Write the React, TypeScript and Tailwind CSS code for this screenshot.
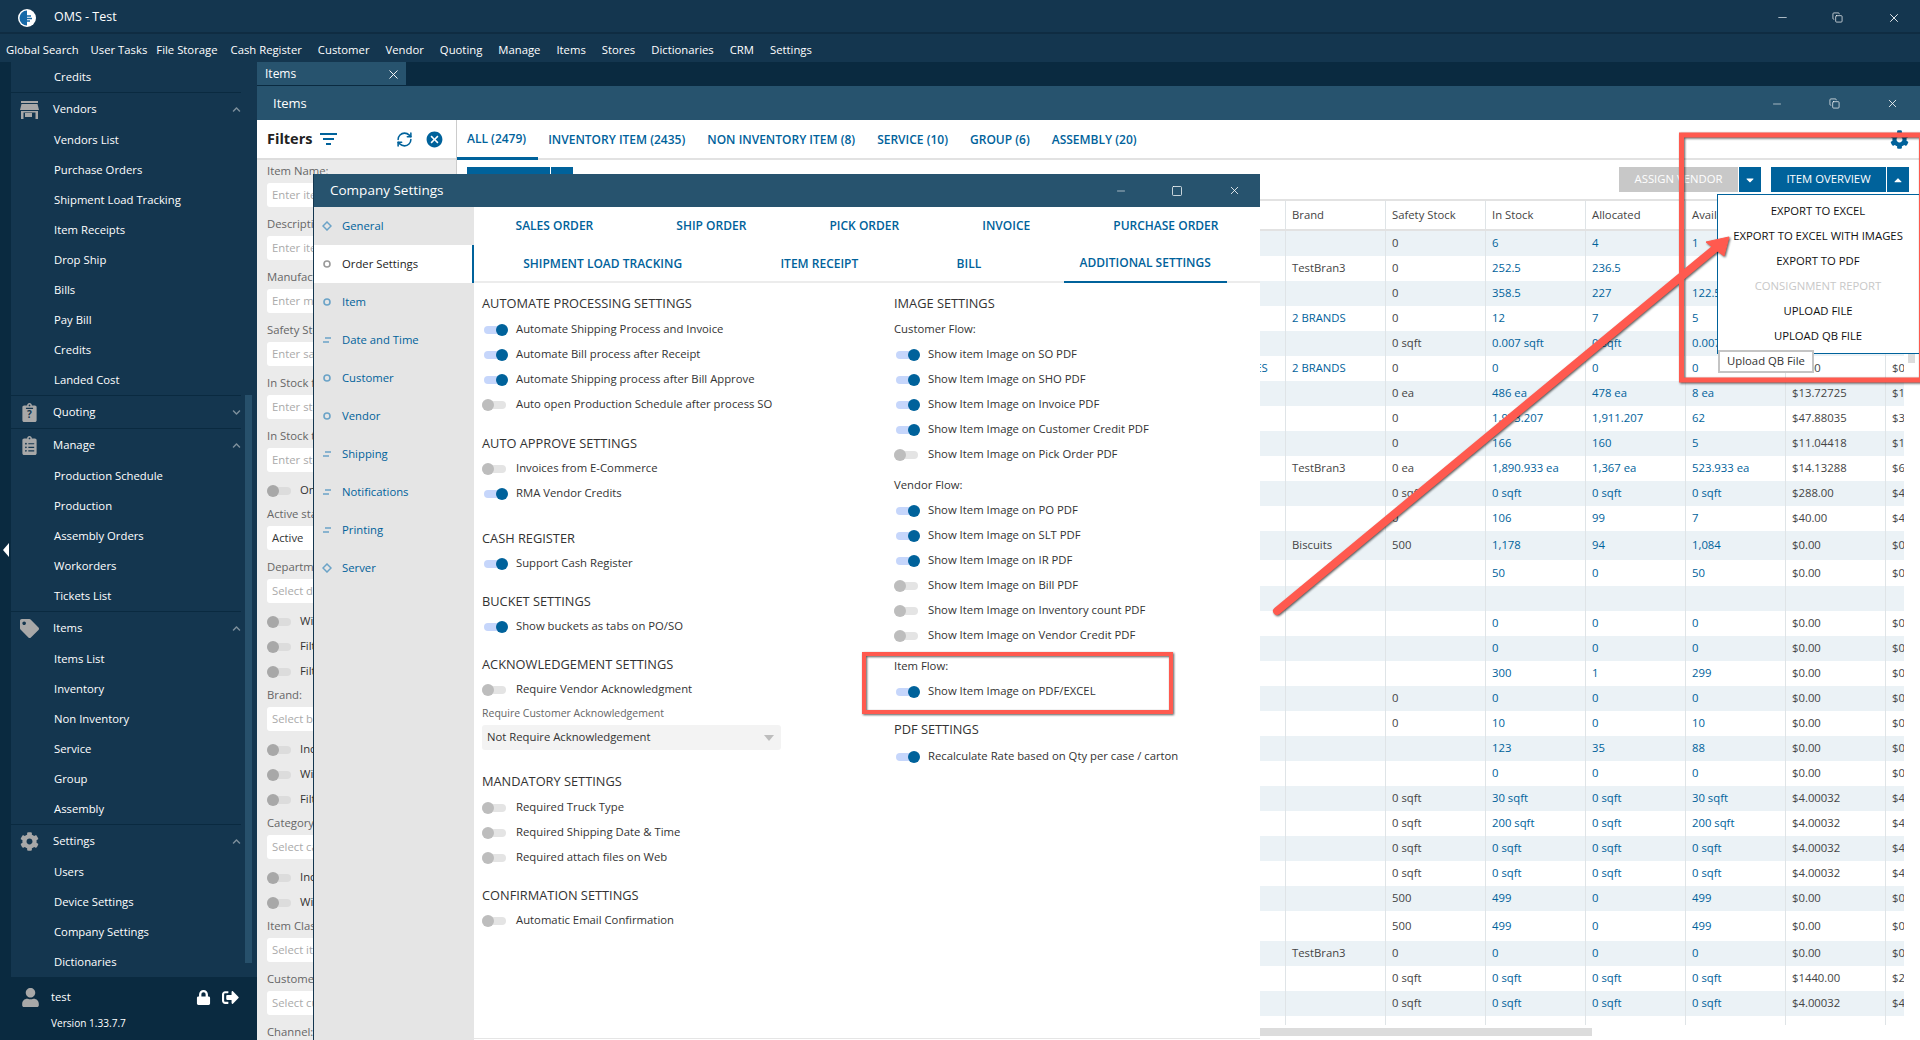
import { ReactNode } from "react";
import { FaClipboard, FaClipboardList, FaTag, FaCog, FaUser, FaLock, FaSignOutAlt, FaChevronUp, FaChevronDown, FaCaretDown, FaCaretUp } from "react-icons/fa";
import { MdCancel } from "react-icons/md";
import { Minus, X, Square, Copy, RefreshCw } from "lucide-react";

// gaps between the top menu items are not even in the app
const menu: [string, string][] = [
  ["Global Search", "mr-[12px]"],
  ["User Tasks", "mr-[9px]"],
  ["File Storage", "mr-[13px]"],
  ["Cash Register", "mr-[16px]"],
  ["Customer", "mr-[16px]"],
  ["Vendor", "mr-[16px]"],
  ["Quoting", "mr-[16px]"],
  ["Manage", "mr-[16px]"],
  ["Items", "mr-[16px]"],
  ["Stores", "mr-[16px]"],
  ["Dictionaries", "mr-[16px]"],
  ["CRM", "mr-[16px]"],
  ["Settings", ""],
];

function SideSub({ label }: { label: string }) {
  return <div className="h-[30px] pl-[43px] flex items-center text-white">{label}</div>;
}

function SideHead({ icon, label, open }: { icon: ReactNode; label: string; open?: boolean }) {
  return (
    <div className="h-[33px] flex items-center border-t border-[#0a2a40] text-white">
      <div className="w-[42px] pl-[9px] text-[#a8a8a8] text-[19px] flex">{icon}</div>
      <span className="flex-1">{label}</span>
      <span className="text-[#7d8f9c] text-[9px]">{open ? <FaChevronUp /> : <FaChevronDown />}</span>
    </div>
  );
}

function StoreIcon() {
  return (
    <svg width="19" height="19" viewBox="0 0 19 19" fill="#a8a8a8">
      <rect x="1" y="1" width="17" height="2" />
      <path d="M1.5 4H17.5L19 10H0Z" />
      <path d="M1 11H18V19H15.5V12.5H3.5V19H1ZM5 13H12V17H5Z" fillRule="evenodd" />
    </svg>
  );
}

function QuoteIcon() {
  return (
    <span className="relative flex">
      <FaClipboard />
      <span className="absolute inset-x-0 top-[5px] text-center text-[10px] leading-[12px] font-bold text-[#14364f]">?</span>
    </span>
  );
}

function Sidebar() {
  const groups = [
    { icon: <StoreIcon />, label: "Vendors", open: true, subs: ["Vendors List", "Purchase Orders", "Shipment Load Tracking", "Item Receipts", "Drop Ship", "Bills", "Pay Bill", "Credits", "Landed Cost"] },
    { icon: <QuoteIcon />, label: "Quoting", open: false, subs: [] },
    { icon: <FaClipboardList />, label: "Manage", open: true, subs: ["Production Schedule", "Production", "Assembly Orders", "Workorders", "Tickets List"] },
    { icon: <FaTag />, label: "Items", open: true, subs: ["Items List", "Inventory", "Non Inventory", "Service", "Group", "Assembly"] },
    { icon: <FaCog />, label: "Settings", open: true, subs: ["Users", "Device Settings", "Company Settings", "Dictionaries"] },
  ];
  return (
    <aside className="w-[257px] shrink-0 flex flex-col bg-[#14364f]">
      <div className="h-[915px] flex overflow-hidden">
        <div className="w-[11px] bg-[#0a2a40] pt-[481px] pl-[3px]">
          <svg width="6" height="14" viewBox="0 0 6 14"><path d="M6 0V14L0 7Z" fill="#fff" /></svg>
        </div>
        <div className="w-[230px]">
          <SideSub label="Credits" />
          {groups.map((g) => (
            <div key={g.label}>
              <SideHead icon={g.icon} label={g.label} open={g.open} />
              {g.subs.map((s) => (
                <SideSub key={s} label={s} />
              ))}
            </div>
          ))}
        </div>
        <div className="flex-1 pl-[4px]">
          <div className="mt-[333px] w-[7px] h-[568px] bg-[#27506b]" />
        </div>
      </div>
      <div className="flex-1 bg-[#0a2a40] text-white pl-[21px] pr-[18px] pt-[10px]">
        <div className="flex items-center h-[20px]">
          <FaUser className="text-[#a8a8a8] text-[19px] mr-[11px]" />
          <span className="flex-1">test</span>
          <FaLock className="text-[15px] mr-[11px]" />
          <FaSignOutAlt className="text-[17px]" />
        </div>
        <div className="pl-[30px] mt-[6px] text-[10.1px] leading-[20px]">Version 1.33.7.7</div>
      </div>
    </aside>
  );
}

function Toggle({ on }: { on?: boolean }) {
  return on ? (
    <span className="relative block w-[26px] h-[12px] shrink-0">
      <span className="absolute left-[2px] right-[1px] top-[2px] h-[8px] rounded-full bg-[#c6d6fb]" />
      <span className="absolute right-0 top-0 w-[12px] h-[12px] rounded-full bg-[#00629b]" />
    </span>
  ) : (
    <span className="relative block w-[26px] h-[12px] shrink-0">
      <span className="absolute left-0 w-[24px] top-[2px] h-[8px] rounded-full bg-[#e4e4e4]" />
      <span className="absolute left-0 top-0 w-[12px] h-[12px] rounded-full bg-[#bdbdbd]" />
    </span>
  );
}

function Field({ label, ph, value }: { label: string; ph?: string; value?: string }) {
  return (
    <div className="mb-[6px]">
      <div className="h-[23px] flex items-center text-[#666] whitespace-nowrap">{label}</div>
      <div className={`h-[24px] bg-white rounded-[3px] px-[5px] flex items-center ${value ? "text-[#333]" : "text-[#aaa]"}`}>{value ?? ph}</div>
    </div>
  );
}

function FilterToggle({ label }: { label: string }) {
  return (
    <div className="h-[25px] flex items-center gap-[9px] text-[#333] whitespace-nowrap">
      <span className="relative block w-[24px] h-[12px] shrink-0">
        <span className="absolute inset-x-0 top-[2px] h-[8px] rounded-full bg-[#dcdcdc]" />
        <span className="absolute left-0 top-0 w-[12px] h-[12px] rounded-full bg-[#a8a8a8]" />
      </span>
      {label}
    </div>
  );
}

function Filters() {
  return (
    <div className="w-[200px] shrink-0 bg-[#ebebeb] border-r border-[#ccc] flex flex-col overflow-hidden">
      <div className="h-[40px] shrink-0 bg-white border-b-2 border-[#ddd] flex items-center pl-[10px] pr-[12px]">
        <span className="text-[14.5px] font-bold text-[#222]">Filters</span>
        <svg className="ml-[8px]" width="17" height="14" viewBox="0 0 17 14" fill="#00629b">
          <rect y="1" width="17" height="2" />
          <rect x="3" y="6" width="11" height="2" />
          <rect x="6" y="11" width="5" height="2" />
        </svg>
        <RefreshCw size={17} strokeWidth={2.2} className="ml-auto mr-[12px] text-[#00629b]" />
        <MdCancel className="text-[#00629b] text-[19px]" />
      </div>
      <div className="px-[10px] flex-1">
        <Field label="Item Name:" ph="Enter item name" />
        <Field label="Description:" ph="Enter item description" />
        <Field label="Manufacturer:" ph="Enter manufacturer" />
        <Field label="Safety Stock:" ph="Enter safety stock" />
        <Field label="In Stock from:" ph="Enter stock from" />
        <Field label="In Stock to:" ph="Enter stock to" />
        <FilterToggle label="Only with stock" />
        <Field label="Active status:" value="Active" />
        <Field label="Department:" ph="Select department" />
        <FilterToggle label="With department" />
        <FilterToggle label="Filter by web" />
        <FilterToggle label="Filter by pos" />
        <Field label="Brand:" ph="Select brand" />
        <FilterToggle label="Include brands" />
        <FilterToggle label="With brand" />
        <FilterToggle label="Filter by brand" />
        <Field label="Category:" ph="Select category" />
        <FilterToggle label="Include categories" />
        <FilterToggle label="With category" />
        <Field label="Item Class:" ph="Select item class" />
        <Field label="Customer:" ph="Select customer" />
        <Field label="Channel:" ph="Select channel" />
      </div>
    </div>
  );
}

type Row = [string, string, string, string, string, string, string, string];
const s4: Row = ["", "", "0 sqft", "0 sqft", "0 sqft", "0 sqft", "$4.00032", "$4"];
const tableRows: Row[] = [
  ["", "", "0", "6", "4", "1", "", ""],
  ["", "TestBran3", "0", "252.5", "236.5", "", "", ""],
  ["", "", "0", "358.5", "227", "122.5", "", ""],
  ["", "2 BRANDS", "0", "12", "7", "5", "", ""],
  ["", "", "0 sqft", "0.007 sqft", "0 sqft", "0.007 sqft", "", ""],
  ["2 CATEGORIES", "2 BRANDS", "0", "0", "0", "0", "$0.00", "$0"],
  ["", "", "0 ea", "486 ea", "478 ea", "8 ea", "$13.72725", "$1"],
  ["", "", "0", "1,973.207", "1,911.207", "62", "$47.88035", "$3"],
  ["", "", "0", "166", "160", "5", "$11.04418", "$1"],
  ["", "TestBran3", "0 ea", "1,890.933 ea", "1,367 ea", "523.933 ea", "$14.13288", "$6"],
  ["", "", "0 sqft", "0 sqft", "0 sqft", "0 sqft", "$288.00", "$4"],
  ["", "", "0", "106", "99", "7", "$40.00", "$4"],
  ["", "Biscuits", "500", "1,178", "94", "1,084", "$0.00", "$0"],
  ["", "", "", "50", "0", "50", "$0.00", "$0"],
  ["", "", "", "", "", "", "", ""],
  ["", "", "", "0", "0", "0", "$0.00", "$0"],
  ["", "", "", "0", "0", "0", "$0.00", "$0"],
  ["", "", "", "300", "1", "299", "$0.00", "$0"],
  ["", "", "0", "0", "0", "0", "$0.00", "$0"],
  ["", "", "0", "10", "0", "10", "$0.00", "$0"],
  ["", "", "", "123", "35", "88", "$0.00", "$0"],
  ["", "", "", "0", "0", "0", "$0.00", "$0"],
  ["", "", "0 sqft", "30 sqft", "0 sqft", "30 sqft", "$4.00032", "$4"],
  ["", "", "0 sqft", "200 sqft", "0 sqft", "200 sqft", "$4.00032", "$4"],
  s4,
  s4,
  ["", "", "500", "499", "0", "499", "$0.00", "$0"],
  ["", "", "500", "499", "0", "499", "$0.00", "$0"],
  ["", "TestBran3", "0", "0", "0", "0", "$0.00", "$0"],
  ["", "", "0 sqft", "0 sqft", "0 sqft", "0 sqft", "$1440.00", "$2"],
  s4,
  ["", "", "", "", "", "", "", ""],
];

const rowHeight = (i: number) => (i === 12 ? "h-[29px]" : i === 13 ? "h-[26px]" : i === 27 ? "h-[30px]" : i === 31 ? "h-[9px]" : "h-[25px]");
const cellBlue = [true, false, false, true, true, true, false, false];

function Table() {
  return (
    <div className="flex-1 flex flex-col overflow-hidden">
      <div className="flex-1 overflow-hidden">
        <div className="grid grid-cols-[729px_repeat(7,100px)_18px] h-[32px] border-y-2 border-[#e2e2e2] text-[#444] w-[1447px]">
          {["", "", "Brand", "Safety Stock", "In Stock", "Allocated", "Available", "", ""].map((h, i) => (
            <div key={i} className={`flex items-center pl-[6px] ${i > 0 && i < 8 ? "border-r border-[#dfe4e7]" : ""}`}>
              {h}
            </div>
          ))}
        </div>
        {tableRows.map((r, i) => (
          <div key={i} className={`grid grid-cols-[729px_repeat(7,100px)_18px] w-[1447px] ${rowHeight(i)} ${i % 2 === 0 ? "bg-[#ebf2f6]" : "bg-white"}`}>
            <div />
            {r.map((c, j) => (
              <div key={j} className={`flex items-center pl-[6px] whitespace-nowrap overflow-hidden border-r border-[#dfe4e7] last:border-r-0 ${cellBlue[j] || c === "2 BRANDS" ? "text-[#00629b]" : "text-[#444]"}`}>
                {c}
              </div>
            ))}
          </div>
        ))}
      </div>
      <div className="h-[15px] shrink-0 pt-[3px] bg-white">
        <div className="w-[1135px] h-[8px] bg-[#dcdcdc]" />
      </div>
    </div>
  );
}

function ItemsPane() {
  const tabs = ["ALL (2479)", "INVENTORY ITEM (2435)", "NON INVENTORY ITEM (8)", "SERVICE (10)", "GROUP (6)", "ASSEMBLY (20)"];
  return (
    <div className="flex-1 flex flex-col bg-white overflow-hidden">
      <div className="h-[40px] shrink-0 flex items-stretch border-b-2 border-[#e2e2e2]">
        {tabs.map((t, i) => (
          <div key={t} className={`pl-[10px] pr-[12px] pt-[1px] flex items-center font-semibold text-[12px] text-[#00629b] whitespace-nowrap ${i === 0 ? "border-b-[3px] border-[#00629b] -mb-[2px]" : ""}`}>
            {t}
          </div>
        ))}
        <FaCog className="ml-auto mr-[11px] mt-[10px] text-[#00629b] text-[19px]" />
      </div>
      <div className="h-[39px] shrink-0 flex items-center pl-[10px] pr-[11px]">
        <div className="w-[83px] h-[25px] bg-[#00629b]" />
        <div className="ml-px w-[22px] h-[25px] bg-[#00629b]" />
        <div className="ml-auto w-[119px] h-[25px] bg-[#c8c8c8] text-white flex items-center justify-center">ASSIGN VENDOR</div>
        <div className="ml-px w-[22px] h-[25px] bg-[#00629b] text-white flex items-center justify-center">
          <FaCaretDown className="text-[12px]" />
        </div>
        <div className="ml-[10px] w-[115px] h-[25px] bg-[#00629b] text-white flex items-center justify-center">ITEM OVERVIEW</div>
        <div className="ml-px w-[22px] h-[25px] bg-[#00629b] text-white flex items-center justify-center">
          <FaCaretUp className="text-[12px]" />
        </div>
      </div>
      <div className="flex-1 flex overflow-hidden">
        <Table />
        <div className="w-[16px] shrink-0 pl-[4px] bg-white">
          <div className="w-[7px] h-[164px] bg-[#dcdcdc]" />
        </div>
      </div>
    </div>
  );
}

function NavDot({ kind, active }: { kind: string; active?: boolean }) {
  const c = active ? "#9a9a9a" : "#6ba3c7";
  return (
    <svg width="10" height="10" viewBox="0 0 10 10" className="shrink-0 ml-[8px] mr-[10px]">
      {kind === "circle" && <circle cx="5" cy="5" r="3" fill="none" stroke={c} strokeWidth="1.6" />}
      {kind === "diamond" && <path d="M5 1L9 5L5 9L1 5Z" fill="none" stroke={c} strokeWidth="1.5" />}
      {kind === "lines" && <path d="M3 3H9M1 7H7" fill="none" stroke={c} strokeWidth="1.5" />}
    </svg>
  );
}

function Setting({ label, on }: { label: string; on?: boolean }) {
  return (
    <div className="h-[25px] flex items-center gap-[8px] text-[#333] whitespace-nowrap">
      <Toggle on={on} />
      {label}
    </div>
  );
}

function Heading({ children, className }: { children: ReactNode; className: string }) {
  return <div className={`h-[24px] flex items-center text-[12.8px] font-medium text-[#333] whitespace-nowrap ${className}`}>{children}</div>;
}

function Plain({ children, className }: { children: ReactNode; className: string }) {
  return <div className={`h-[25px] flex items-center text-[#333] ${className}`}>{children}</div>;
}

function Modal() {
  const nav: [string, string][] = [["General", "diamond"], ["Order Settings", "circle"], ["Item", "circle"], ["Date and Time", "lines"], ["Customer", "circle"], ["Vendor", "circle"], ["Shipping", "lines"], ["Notifications", "lines"], ["Printing", "lines"], ["Server", "diamond"]];
  const row1 = ["SALES ORDER", "SHIP ORDER", "PICK ORDER", "INVOICE", "PURCHASE ORDER"];
  const row2 = ["SHIPMENT LOAD TRACKING", "ITEM RECEIPT", "BILL", "ADDITIONAL SETTINGS"];
  return (
    <div className="absolute left-[313px] top-[174px] w-[947px] h-[866px] bg-white border-l border-[#14364f] flex flex-col">
      <div className="h-[33px] shrink-0 bg-[#27536e] text-white flex items-center pl-[16px] text-[13.5px]">
        <span className="flex-1">Company Settings</span>
        <Minus size={12} strokeWidth={1.5} className="mr-[44px] text-[#cfd8de]" />
        <Square size={12} strokeWidth={1.5} className="mr-[45px]" />
        <X size={13} strokeWidth={1.5} className="mr-[19px]" />
      </div>
      <div className="flex-1 flex overflow-hidden">
        <div className="w-[160px] shrink-0 bg-[#e5e5e5]">
          {nav.map(([label, kind]) => {
            const active = label === "Order Settings";
            return (
              <div key={label} className={`h-[38px] flex items-center ${active ? "bg-white border-r-2 border-[#00629b] text-[#222]" : "text-[#00629b]"}`}>
                <NavDot kind={kind} active={active} />
                {label}
              </div>
            );
          })}
        </div>
        <div className="flex-1 flex flex-col min-w-0">
          <div className="h-[76px] shrink-0 border-b-2 border-[#ececec] font-semibold text-[12px] text-[#00629b]">
            <div className="h-[38px] flex justify-around">
              {row1.map((t) => (
                <div key={t} className="px-4 flex items-center">{t}</div>
              ))}
            </div>
            <div className="h-[38px] flex justify-around">
              {row2.map((t) => (
                <div key={t} className={`px-4 flex items-center whitespace-nowrap ${t === "ADDITIONAL SETTINGS" ? "border-b-2 border-[#00629b] -mb-[2px] h-[38px]" : ""}`}>{t}</div>
              ))}
            </div>
          </div>
          <div className="flex-1 flex pt-[9px] pl-[8px] border-b border-[#e5e5e5] mb-px">
            <div className="w-[412px] shrink-0">
              <Heading className="mb-[1px]">AUTOMATE PROCESSING SETTINGS</Heading>
              <Setting on label="Automate Shipping Process and Invoice" />
              <Setting on label="Automate Bill process after Receipt" />
              <Setting on label="Automate Shipping process after Bill Approve" />
              <Setting label="Auto open Production Schedule after process SO" />
              <Heading className="mt-[15px]">AUTO APPROVE SETTINGS</Heading>
              <Setting label="Invoices from E-Commerce" />
              <Setting on label="RMA Vendor Credits" />
              <Heading className="mt-[21px]">CASH REGISTER</Heading>
              <Setting on label="Support Cash Register" />
              <Heading className="mt-[14px]">BUCKET SETTINGS</Heading>
              <Setting on label="Show buckets as tabs on PO/SO" />
              <Heading className="mt-[14px]">ACKNOWLEDGEMENT SETTINGS</Heading>
              <Setting label="Require Vendor Acknowledgment" />
              <div className="h-[23px] flex items-center text-[#666] text-[10.5px]">Require Customer Acknowledgement</div>
              <div className="w-[299px] h-[25px] bg-[#f3f3f3] rounded-[3px] pl-[5px] pr-[7px] flex items-center justify-between text-[#333]">
                Not Require Acknowledgement
                <svg width="10" height="6" viewBox="0 0 10 6"><path d="M0 0H10L5 6Z" fill="#bdbdbd" /></svg>
              </div>
              <Heading className="mt-[20px] mb-[1px]">MANDATORY SETTINGS</Heading>
              <Setting label="Required Truck Type" />
              <Setting label="Required Shipping Date & Time" />
              <Setting label="Required attach files on Web" />
              <Heading className="mt-[14px]">CONFIRMATION SETTINGS</Heading>
              <Setting label="Automatic Email Confirmation" />
            </div>
            <div className="flex-1">
              <Heading className="mb-[1px]">IMAGE SETTINGS</Heading>
              <Plain className="">Customer Flow:</Plain>
              <Setting on label="Show item Image on SO PDF" />
              <Setting on label="Show Item Image on SHO PDF" />
              <Setting on label="Show Item Image on Invoice PDF" />
              <Setting on label="Show Item Image on Customer Credit PDF" />
              <Setting label="Show Item Image on Pick Order PDF" />
              <Plain className="mt-[6px]">Vendor Flow:</Plain>
              <Setting on label="Show Item Image on PO PDF" />
              <Setting on label="Show Item Image on SLT PDF" />
              <Setting on label="Show Item Image on IR PDF" />
              <Setting label="Show Item Image on Bill PDF" />
              <Setting label="Show Item Image on Inventory count PDF" />
              <Setting label="Show Item Image on Vendor Credit PDF" />
              <Plain className="mt-[6px]">Item Flow:</Plain>
              <Setting on label="Show Item Image on PDF/EXCEL" />
              <Heading className="mt-[14px] mb-[2px]">PDF SETTINGS</Heading>
              <Setting on label="Recalculate Rate based on Qty per case / carton" />
            </div>
          </div>
        </div>
      </div>
    </div>
  );
}

function ExportMenu() {
  const items = ["EXPORT TO EXCEL", "EXPORT TO EXCEL WITH IMAGES", "EXPORT TO PDF", "CONSIGNMENT REPORT", "UPLOAD FILE", "UPLOAD QB FILE"];
  return (
    <>
      <div className="absolute left-[1717px] top-[194px] w-[203px] h-[160px] bg-white border border-[#00629b] pt-[4px]">
        {items.map((t) => (
          <div key={t} className={`h-[25px] flex items-center justify-center pr-[1px] ${t === "CONSIGNMENT REPORT" ? "text-[#c8c8c8]" : "text-[#111]"}`}>
            {t}
          </div>
        ))}
      </div>
      <div className="absolute left-[1718px] top-[350px] w-[96px] h-[23px] bg-white border-2 border-[#c4c4c4] flex items-center justify-center text-[#333]">Upload QB File</div>
    </>
  );
}

function Annotations() {
  return (
    <svg className="absolute inset-0 pointer-events-none" width="1920" height="1040" fill="none">
      <g className="drop-shadow-[1.5px_1.5px_1px_rgba(0,0,0,0.65)]">
        <rect x="864" y="654" width="307" height="58" stroke="#ff5a4f" strokeWidth="4" />
        <rect x="1681.5" y="135" width="240" height="245" stroke="#ff5a4f" strokeWidth="5" />
        <path d="M1277 611L1717 247" stroke="#ff5a4f" strokeWidth="8" strokeLinecap="round" />
        <path d="M1729 237L1706 242L1724 256Z" fill="#ff5a4f" stroke="#ff5a4f" strokeWidth="1" strokeLinejoin="round" />
      </g>
    </svg>
  );
}

export default function App() {
  return (
    <div className="relative w-screen h-screen overflow-hidden flex flex-col bg-[#14364f] font-['Open_Sans','Noto_Sans',sans-serif] text-[11.3px]">
      <div className="h-[34px] shrink-0 pt-[3px] flex items-center border-b-2 border-[#0f2c42]">
        <svg className="ml-[18px]" width="18" height="18" viewBox="0 0 18 18">
          <circle cx="9" cy="9" r="9" fill="#fff" />
          <path d="M9 1.5A7.5 7.5 0 0 0 9 16.5Z" fill="#1669a8" />
          <path d="M5 7H13M4 9.5H14M6 12H12" stroke="#1669a8" strokeWidth="1.3" />
        </svg>
        <span className="ml-[18px] flex-1 text-white text-[12.5px]">OMS - Test</span>
        <Minus size={13} strokeWidth={1.5} className="mr-[43px] text-[#cfd8de]" />
        <Copy size={11} strokeWidth={1.5} className="mr-[44px] text-white" />
        <X size={14} strokeWidth={1.5} className="mr-[19px] text-white" />
      </div>
      <div className="h-[28px] shrink-0 pt-[5px] flex items-center pl-[6px] text-white">
        {menu.map(([m, gap]) => (
          <span key={m} className={gap}>{m}</span>
        ))}
      </div>
      <div className="flex-1 flex min-h-0">
        <Sidebar />
        <div className="flex-1 flex flex-col min-w-0 bg-[#0a2a40]">
          <div className="h-[24px] shrink-0">
            <div className="w-[149px] h-[23px] pt-px bg-[#27536e] text-white flex items-center justify-between pl-[8px] pr-[5px] text-[12px]">
              Items
              <X size={15} strokeWidth={1.5} />
            </div>
          </div>
          <div className="h-[34px] shrink-0 pt-px bg-[#27536e] text-white flex items-center pl-[16px] text-[13px]">
            <span className="flex-1">Items</span>
            <Minus size={12} strokeWidth={1.5} className="mr-[46px] text-[#cfd8de]" />
            <Copy size={11} strokeWidth={1.5} className="mr-[46px]" />
            <X size={13} strokeWidth={1.5} className="mr-[21px]" />
          </div>
          <div className="flex-1 flex min-h-0">
            <Filters />
            <ItemsPane />
          </div>
        </div>
      </div>
      <Modal />
      <ExportMenu />
      <Annotations />
    </div>
  );
}
